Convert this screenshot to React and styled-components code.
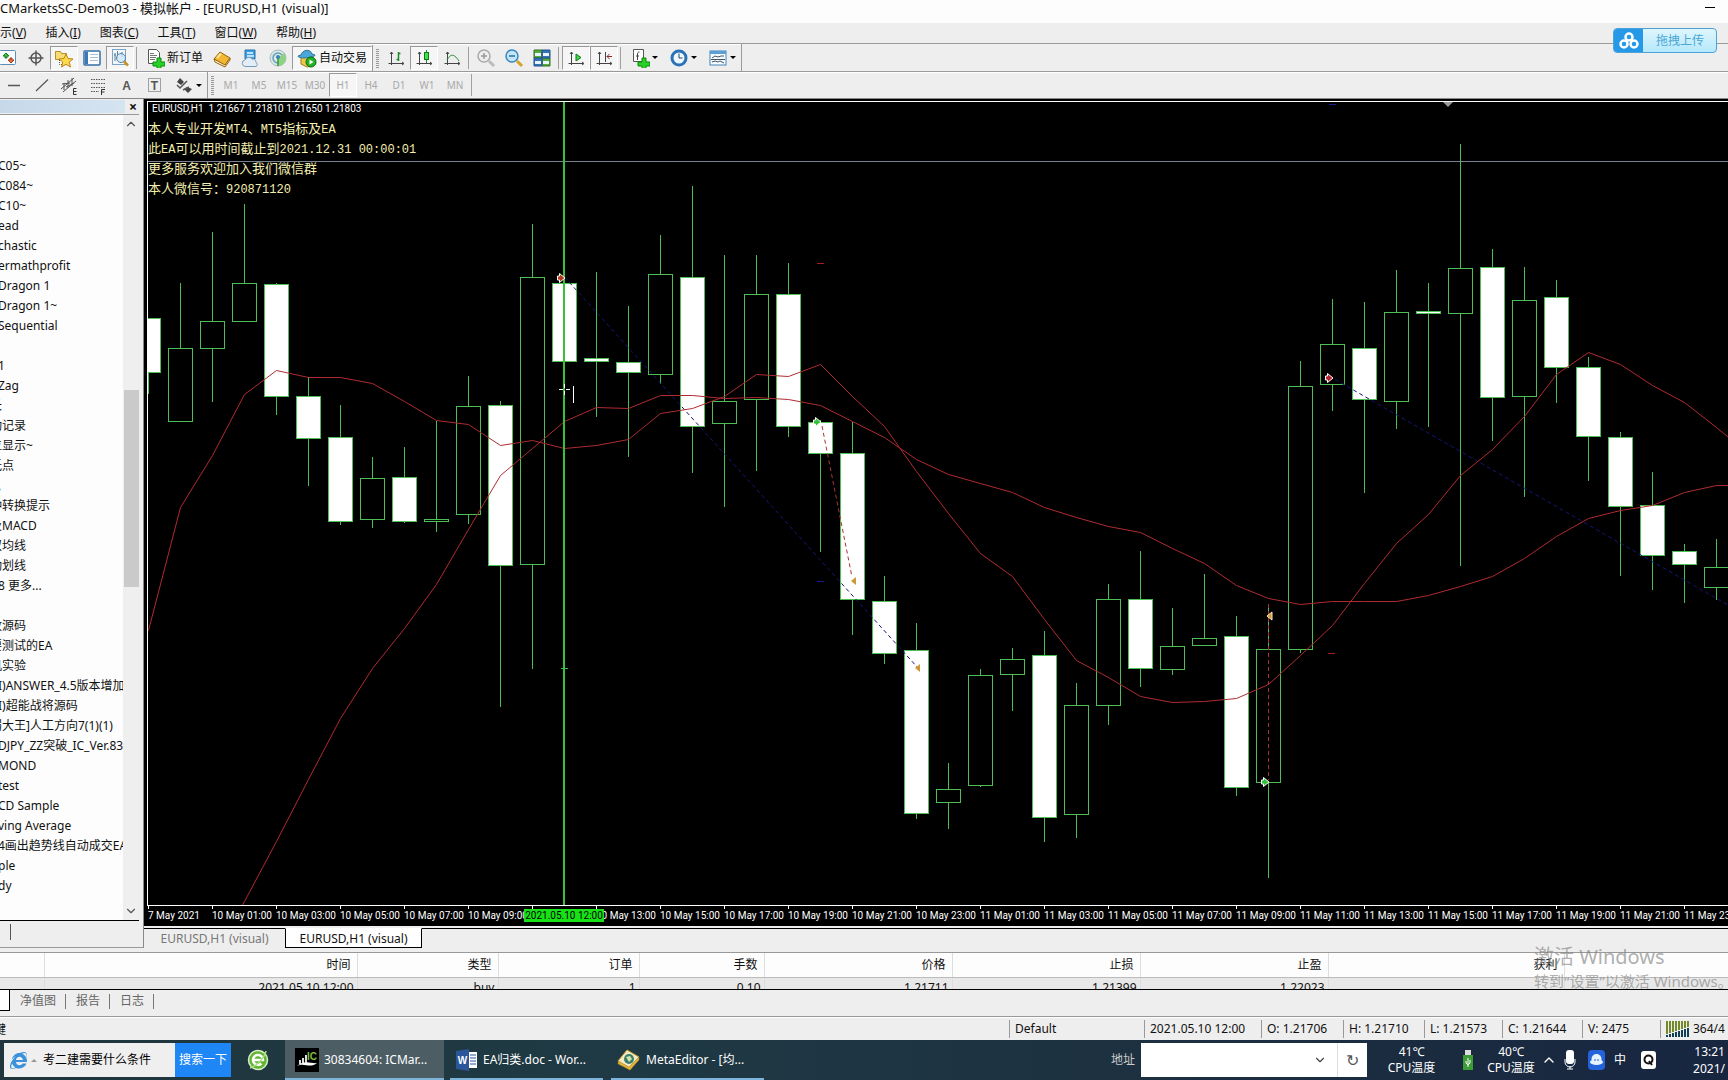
import React from 'react';
import styled, { createGlobalStyle, css } from 'styled-components';
import { FaInternetExplorer } from 'react-icons/fa';
import { ChevronDown, ChevronUp } from 'lucide-react';

const GlobalStyle = createGlobalStyle`
  * {
    box-sizing: border-box;
  }
  body {
    margin: 0;
    overflow: hidden;
    background: #eeeeee;
    color: #111;
    font-family: "Noto Sans", "Noto Sans CJK SC", sans-serif;
    font-size: 12px;
    line-height: 20px;
  }
  button, input {
    font: inherit;
    color: inherit;
    margin: 0;
    padding: 0;
    border: 0;
    background: none;
  }
  svg {
    display: block;
    flex: none;
  }
`;

const Page = styled.div`
  display: flex;
  flex-direction: column;
  min-height: 100vh;
  position: relative;
`;

const TitleBar = styled.header`
  display: flex;
  justify-content: space-between;
  height: 23px;
  padding: 0 13px 0 0;
  background: #fdfdfd;
  font-size: 13px;
  line-height: 16px;
`;

const MinimizeButton = styled.button`
  width: 10px;
  height: 8px;
  border-bottom: 1px solid #000;
`;

const MenuBar = styled.nav`
  display: flex;
  gap: 19px;
  height: 20px;
`;

const MenuItem = styled.button`
  white-space: nowrap;
`;

const Toolbar = styled.div`
  display: flex;
  align-items: center;
  width: ${({ $full }) => ($full ? 'auto' : '742px')};
  height: 27px;
  border-top: 1px solid #9a9a9a;
  border-right: ${({ $full }) => ($full ? 0 : 1)}px solid #9a9a9a;
  box-shadow: inset 0 1px #fff;
`;

const ToolbarLine = styled.div`
  border-top: 1px solid #9a9a9a;
  overflow: hidden;
  ${Toolbar} {
    border-top: 0;
  }
`;

const ToolGroup = styled.div`
  display: flex;
  align-items: center;
  margin-left: ${({ $clip }) => ($clip ? '-6px' : 0)};
`;

const ToolButton = styled.button`
  display: flex;
  align-items: center;
  justify-content: center;
  flex: none;
  gap: 2px;
  width: ${({ $width }) => $width || 28}px;
  height: 24px;
  white-space: nowrap;
  ${({ $pressed }) =>
    $pressed &&
    css`
      border: 1px solid #fff;
      border-top-color: #999;
      border-left-color: #999;
      background: #f6f6f6;
    `}
`;

const PeriodButton = styled(ToolButton)`
  font-size: 10px;
  color: #a8a8a8;
`;

const Arrow = styled.i`
  border: 3px solid transparent;
  border-top-color: #000;
  border-bottom: 0;
`;

const Separator = styled.i`
  width: 6px;
  height: 22px;
  background: linear-gradient(#a0a0a0, #a0a0a0) 2px 0 / 1px 100% no-repeat;
`;

const Grip = styled.i`
  width: 10px;
  height: 26px;
  border-left: 1px solid #999;
  background: repeating-linear-gradient(#999 0 1px, transparent 1px 2px) 3px 4px / 3px 19px no-repeat;
`;

const Main = styled.main`
  display: flex;
  flex: 1;
  min-height: 0;
  padding-bottom: 4px;
  border-top: 1px solid #888;
`;

const Navigator = styled.aside`
  display: flex;
  flex-direction: column;
  width: 144px;
  flex: none;
  border-right: 1px solid #888;
  border-bottom: 1px solid #999;
`;

const NavHeader = styled.div`
  display: flex;
  align-items: center;
  justify-content: flex-end;
  height: 16px;
  padding-right: 2px;
  margin-right: 4px;
  border-bottom: 1px solid #999;
  background: linear-gradient(90deg, #c6d9ea, #d5e4f1) 0 1px / 125px 13px no-repeat;
`;

const CloseButton = styled.button`
  font-size: 14px;
  font-weight: 700;
  line-height: 12px;
`;

const NavBody = styled.div`
  display: flex;
  flex: 1;
  min-height: 0;
  margin-right: 4px;
  border-bottom: 1px solid #000;
`;

const Tree = styled.ul`
  width: 123px;
  margin: 0;
  padding: 41px 0 0;
  overflow: hidden;
  list-style: none;
  background: #fdfdfd;
`;

const TreeItem = styled.li`
  height: 20px;
  margin-left: ${({ $cut }) => ($cut ? -10 : -2)}px;
  white-space: nowrap;
`;

const ScrollBar = styled.div`
  display: flex;
  flex-direction: column;
  justify-content: space-between;
  align-items: center;
  width: 16px;
  padding: 2px 0;
  background: #efefef;
  color: #555;
`;

const Thumb = styled.i`
  width: 15px;
  flex: 0 0 197px;
  background: #cacaca;
`;

const Track = styled.div`
  display: flex;
  flex-direction: column;
  flex: 1;
  &::before {
    content: '';
    flex: 258 0 0;
  }
  &::after {
    content: '';
    flex: 315 0 0;
  }
`;

const NavTabs = styled.div`
  height: 26px;
  padding: 3px 0 0 10px;
  &::before {
    content: '';
    display: block;
    width: 1px;
    height: 16px;
    background: #555;
  }
`;

const ChartColumn = styled.section`
  display: flex;
  flex-direction: column;
  flex: 1;
  min-width: 0;
`;

const ChartFrame = styled.div`
  display: flex;
  flex: 1;
  min-height: 0;
  flex-direction: column;
  padding: 2px 0 0 3px;
  background: #000;
  color: #fff;
`;

const Plot = styled.div`
  flex: 1;
  min-height: 0;
  position: relative;
  border: 1px solid #fff;
  border-right: 0;
  overflow: hidden;
`;

const Overlay = styled.div`
  position: absolute;
  top: 0;
  left: 0;
`;

const Quote = styled.div`
  height: 16px;
  padding-left: 4px;
  font: 10px/14px Roboto, sans-serif;
  white-space: pre;
`;

const Notice = styled.p`
  height: 20px;
  margin: 0;
  font-family: "Noto Sans CJK SC", sans-serif;
  font-size: 13px;
  line-height: 20px;
  color: #f3efb0;
  white-space: pre;
`;

const Mono = styled.span`
  font-family: "Liberation Mono", monospace;
  font-size: 12px;
  line-height: 12px;
`;

const TimeAxis = styled.div`
  position: relative;
  display: flex;
  height: 20px;
  padding-left: 1px;
  overflow: hidden;
  font: 10px/20px Roboto, sans-serif;
`;

const TimeLabel = styled.span`
  flex: 0 0 64px;
  white-space: nowrap;
  background: linear-gradient(#fff, #fff) 0 0 / 1px 3px no-repeat;
`;

const TimeMark = styled.span`
  position: absolute;
  left: 377px;
  top: 3px;
  width: 80px;
  line-height: 13px;
  text-align: center;
  color: #000;
  background: #16e216;
`;

const ChartTabs = styled.div`
  display: flex;
  height: 20px;
  margin-top: 2px;
`;

const ChartTab = styled.button`
  width: ${({ $active }) => ($active ? 137 : 141)}px;
  border-top: 1px solid #000;
  color: #777;
  ${({ $active }) =>
    $active &&
    css`
      border: 1px solid #000;
      border-top-color: #fff;
      background: #fff;
      color: #111;
    `}
`;

const TabRest = styled.i`
  flex: 1;
  border-top: 1px solid #000;
`;

const Terminal = styled.section`
  position: relative;
  height: 38px;
  overflow: hidden;
  border-top: 1px solid #999;
  border-bottom: 1px solid #000;
`;

const OrderTable = styled.table`
  width: 100%;
  table-layout: fixed;
  border-collapse: collapse;
  line-height: 23px;
  th,
  td {
    padding: 0 6px;
    text-align: right;
    font-weight: 400;
    border-right: 1px solid #ddd;
  }
  th {
    height: 24px;
    background: #fdfdfd;
    border-bottom: 1px solid #bbb;
  }
  td {
    padding: 0 3px;
    background: #e8e8e8;
    line-height: 20px;
  }
  th:last-child,
  td:last-child {
    border-right: 0;
  }
`;

const TerminalTabs = styled.div`
  display: flex;
  height: 27px;
  padding-bottom: 5px;
  border-bottom: 1px solid #999;
  color: #666;
`;

const ActiveStub = styled.i`
  width: 10px;
  background: #fff;
  border-right: 1px solid #000;
  border-bottom: 1px solid #000;
`;

const TerminalTab = styled.button`
  padding: 0 10px;
  line-height: 18px;
  background: linear-gradient(#777, #777) 100% 4px / 1px 15px no-repeat;
`;

const StatusBar = styled.footer`
  display: flex;
  height: 23px;
  padding-top: 3px;
  box-shadow: inset 0 1px #fff;
  overflow: hidden;
`;

const Hint = styled.span`
  flex: 1;
  margin-left: -6px;
`;

const StatusCell = styled.span`
  display: flex;
  align-items: center;
  gap: 3px;
  flex: 0 0 ${({ $width }) => $width}px;
  height: 18px;
  padding-left: 5px;
  border-left: 1px solid #999;
  white-space: nowrap;
  overflow: hidden;
`;

const Taskbar = styled.div`
  display: flex;
  align-items: center;
  height: 40px;
  padding-left: 4px;
  overflow: hidden;
  background: linear-gradient(90deg, #20353c, #1f3a44 35%, #1c2f40 70%, #182640);
  color: #fff;
`;

const SearchBox = styled.form`
  display: flex;
  align-items: center;
  height: 34px;
  padding-left: 6px;
  background: #efefef;
  color: #000;
`;

const SearchInput = styled.input`
  width: 138px;
  padding-left: 6px;
`;

const UpMark = styled.i`
  margin-left: 4px;
  border: 3px solid transparent;
  border-top: 0;
  border-bottom-color: #999;
`;

const SearchButton = styled.button`
  width: 56px;
  height: 34px;
  background: #1f86f5;
  color: #fff;
`;

const PinButton = styled.button`
  display: flex;
  justify-content: center;
  width: 54px;
`;

const Task = styled.button`
  display: flex;
  align-items: center;
  gap: 5px;
  width: ${({ $active }) => ($active ? 159 : 153)}px;
  height: 40px;
  margin-right: ${({ $active }) => ($active ? 6 : 8)}px;
  padding: 2px 0 0 ${({ $active }) => ($active ? 10 : 6)}px;
  border-bottom: 2px solid #7db4dc;
  background: ${({ $active }) => ($active ? '#4c5d64' : 'none')};
  white-space: nowrap;
`;

const Tray = styled.div`
  display: flex;
  align-items: center;
  margin-left: auto;
`;

const Address = styled.label`
  display: flex;
  align-items: center;
  gap: 6px;
  color: #ccc;
`;

const AddressInput = styled.input`
  width: 172px;
  height: 34px;
`;

const AddressBox = styled.span`
  display: flex;
  align-items: center;
  height: 34px;
  background: #fff;
  color: #444;
`;

const Refresh = styled.button`
  width: 30px;
  height: 34px;
  margin-left: 10px;
  border-left: 1px solid #ddd;
  font-size: 16px;
  color: #555;
`;

const Gauge = styled.span`
  width: ${({ $width }) => $width}px;
  text-align: center;
  line-height: 16px;
  white-space: pre-line;
`;

const TrayIcon = styled.span`
  display: flex;
  justify-content: center;
  width: ${({ $width }) => $width || 24}px;
`;

const Clock = styled.time`
  width: 35px;
  margin-left: 29px;
  line-height: 17px;
  text-align: right;
  padding-right: 3px;
  white-space: pre-line;
`;

const UploadButton = styled.button`
  position: absolute;
  top: 28px;
  right: 11px;
  display: flex;
  align-items: center;
  width: 104px;
  height: 25px;
  border: 1px solid #4da3d8;
  border-radius: 4px;
  overflow: hidden;
  background: linear-gradient(#dff5fd, #b5e9fb);
  color: #4aa6d4;
`;

const UploadLogo = styled.span`
  display: flex;
  align-items: center;
  justify-content: center;
  width: 29px;
  height: 100%;
  margin-right: 13px;
  background: #2598e8;
`;

const Watermark = styled.div`
  position: absolute;
  right: 0;
  bottom: 88px;
  width: 194px;
  overflow: hidden;
  white-space: nowrap;
  color: rgba(130, 130, 130, 0.65);
  font-size: 15px;
  line-height: 22px;
  strong {
    display: block;
    font-size: 20px;
    font-weight: 400;
    line-height: 26px;
  }
`;

const Icon = ({ size = 20, children }) => (
  <svg width={size} height={size} viewBox="0 0 20 20" fill="none" stroke="#555" strokeWidth="1">
    {children}
  </svg>
);

const Plus = () => (
  <path d="M12 10h4v4h4v4h-4v3h-4v-3H8v-4h4z" fill="#27d127" stroke="#0b8a0b" />
);

const MarketIcon = () => (
  <Icon>
    <rect x="1.5" y="2.5" width="16" height="14" rx="1" fill="#f8fbfe" stroke="#5b8fb7" />
    <path d="M8 5l3 3H9v2H7V8H5z" fill="#3cc43c" stroke="#18761b" />
    <path d="M13 15l-3-3h2v-2h2v2h2z" fill="#ee6b3b" stroke="#a43912" />
  </Icon>
);

const CrossIcon = () => (
  <Icon>
    <circle cx="10" cy="10" r="5" strokeWidth="1.5" />
    <path d="M10 2.500v15M2.500 10h15" strokeWidth="1.500" />
  </Icon>
);

const FavIcon = () => (
  <Icon>
    <path d="M1.5 3.500h5l1 2h5v6h-11z" fill="#f6dc72" stroke="#b5912c" />
    <path d="M5.500 12v4.500h4" strokeDasharray="1 1" />
    <path d="M12 6l2 4.500 5 .5-3.800 3 1.300 5-4.500-2.700L7.600 19l1.200-5L5 11l5-.5z" fill="#ffd94c" stroke="#b88713" />
  </Icon>
);

const PanelIcon = () => (
  <Icon>
    <rect x="2" y="3" width="16" height="14" rx="1" fill="#fff" stroke="#336fa8" strokeWidth="1.500" />
    <path d="M3 4h3v12H3z" fill="#3b78b5" stroke="none" />
    <path d="M8 6.500h8M8 9.500h8M8 12.500h8" stroke="#a6bfd8" />
  </Icon>
);

const TesterIcon = () => (
  <Icon>
    <rect x="2.500" y="1.500" width="13" height="15" fill="#f1f7fb" stroke="#7ba3c5" />
    <path d="M5 5v8M7.500 3v8M12 4v5M4 7h2" stroke="#5c7b93" />
    <circle cx="11" cy="10" r="4.500" fill="#cfe7f7" fillOpacity=".8" stroke="#5487ad" />
    <path d="M14 13.500l4 4" stroke="#c69223" strokeWidth="2.500" />
  </Icon>
);

const OrderIcon = () => (
  <Icon>
    <path d="M3.500 1.500h8l3 3v11h-11z" fill="#fff" />
    <path d="M5 5.500h4M5 7.500h7M5 9.500h6M5 11.500h5" stroke="#777" />
    <Plus />
  </Icon>
);

const BookIcon = () => (
  <Icon>
    <path d="M2 11l6-7 10 6-5 7.500z" fill="#f2b632" stroke="#94620c" />
    <path d="M2 11l1 3 10 5 5-7v-2l-5 7z" fill="#fff1c7" stroke="#94620c" />
    <path d="M5 10l4-4.500" stroke="#ffe69a" strokeWidth="2" />
  </Icon>
);

const CloudIcon = () => (
  <Icon>
    <path d="M5 2h10v9H5z" fill="#3da1e4" stroke="#2270aa" />
    <path d="M7 5h6M7 8h7" stroke="#e9f7ff" strokeWidth="1.500" />
    <path d="M5 18.500a3.300 3.300 0 0 1 0-6.500 4 4 0 0 1 7-1 3.300 3.300 0 0 1 4 3.500 2.200 2.200 0 0 1 0 4z" fill="#e2edf8" stroke="#7b9abb" />
  </Icon>
);

const SignalIcon = () => (
  <Icon>
    <circle cx="10" cy="10" r="8" fill="#d9ebe0" stroke="#a6bcc9" />
    <circle cx="10" cy="10" r="5" stroke="#689bc2" strokeWidth="1.500" />
    <path d="M10 10l1 8a8 8 0 0 0 5-13z" fill="#8fd380" stroke="none" />
    <path d="M10 10v8" stroke="#32963d" strokeWidth="1.500" />
    <circle cx="10" cy="9" r="2" fill="#3a80bd" stroke="none" />
  </Icon>
);

const AutoIcon = () => (
  <Icon>
    <path d="M4 9h11l2 8-7 2-6-3z" fill="#efc74b" stroke="#a37a1d" />
    <path d="M4 7c1-5 9-7 11-1l3 1c1 2-16 5-17 1z" fill="#4aa8d8" stroke="#2f7398" />
    <circle cx="14" cy="14" r="5" fill="#25b325" stroke="#0a6b0a" />
    <path d="M12.500 11.500v5l4-2.500z" fill="#fff" stroke="none" />
  </Icon>
);

const Axes = () => <path d="M5.500 4v13M2.500 15.500h15M4 6l1.500-2L7 6M16 14l2 1.500-2 1.500" stroke="#444" />;

const BarsIcon = () => (
  <Icon>
    <Axes />
    <path d="M12.500 4v9M10.500 11.500h2M12.500 5.500h2" stroke="#1c8a2b" strokeWidth="1.500" />
  </Icon>
);

const CandlesIcon = () => (
  <Icon>
    <Axes />
    <path d="M12.500 2v13" stroke="#1c8a2b" />
    <rect x="10.500" y="4.500" width="4" height="7" fill="#3fe04c" stroke="#0c7d18" />
  </Icon>
);

const LineIcon = () => (
  <Icon>
    <Axes />
    <path d="M5 12c3-5 6-8 12 1" stroke="#1c8a2b" />
  </Icon>
);

const ZoomIcon = ({ out }) => (
  <Icon>
    <circle cx="8" cy="8" r="6" fill={out ? '#c4e5f8' : '#eee'} stroke={out ? '#3888bd' : '#aaa'} strokeWidth="1.500" />
    <path d={out ? 'M5 8h6' : 'M5 8h6M8 5v6'} stroke={out ? '#256fa2' : '#999'} strokeWidth="1.500" />
    <path d="M13 13l5 5" stroke={out ? '#d7a329' : '#bbb'} strokeWidth="3" />
  </Icon>
);

const TileIcon = () => (
  <Icon>
    <path d="M2 2h8v8H2zM10 10h8v8h-8z" fill="#55ad3c" stroke="#356f2a" />
    <path d="M10 2h8v8h-8zM2 10h8v8H2z" fill="#3472b9" stroke="#24518a" />
    <path d="M3 5h6v3H3zM11 5h6v3h-6zM3 13h6v3H3zM11 13h6v3h-6z" fill="#eaf4ff" stroke="none" />
  </Icon>
);

const ScrollIcon = () => (
  <Icon>
    <Axes />
    <path d="M10 6v7l5-3.500z" fill="#41d54b" stroke="#117c1c" />
  </Icon>
);

const ShiftIcon = () => (
  <Icon>
    <Axes />
    <path d="M11.500 4v10" stroke="#444" />
    <path d="M18 8.500h-5M15.500 6L13 8.500l2.500 2.500" stroke="#8b2a22" />
  </Icon>
);

const IndicatorIcon = () => (
  <Icon>
    <path d="M3.500 4.500v-3h10v12h-10z" fill="#fff" />
    <path d="M9.500 4c-2 0-2 1-2 3v5M6 8h3" stroke="#444" />
    <Plus />
  </Icon>
);

const ClockIcon = () => (
  <Icon>
    <circle cx="10" cy="10" r="7" fill="#eef8ff" stroke="#2972b8" strokeWidth="3" />
    <path d="M10 5.500V10h3.500" stroke="#345" />
  </Icon>
);

const TemplateIcon = () => (
  <Icon>
    <rect x="2" y="3" width="16" height="14" fill="#f5fbff" stroke="#4584b7" />
    <path d="M2 3h16v3H2z" fill="#5b9fd6" stroke="none" />
    <path d="M4 10l3-2 3 1 3-1 3 0M4 14l3-1 3 1 2-1 4 2M3 11.500h14" stroke="#456" />
  </Icon>
);

const HLineIcon = () => <Icon><path d="M4 10.500h12" strokeWidth="1.500" /></Icon>;
const TrendIcon = () => <Icon><path d="M4 16L16 4.500" strokeWidth="1.200" /></Icon>;

const ChannelIcon = () => (
  <Icon>
    <path d="M1 14L14 3M3 17L16 6M4 8v7M8 5v8M12 3v8M2 9l8-1M6 12l8-4" />
    <path d="M16.500 13.500h-3v6h3M13.500 16.500h3" stroke="#333" />
  </Icon>
);

const FiboIcon = () => (
  <Icon>
    <path d="M3 4.500h14M3 8.500h14M3 12.500h14M3 16.500h8" strokeDasharray="1.500 1" />
    <path d="M13.500 20v-5.500h3.500M13.500 17h3" stroke="#333" />
  </Icon>
);

const LetterIcon = ({ letter, boxed }) => (
  <Icon>
    {boxed && <rect x="4.500" y="3.500" width="12" height="13" strokeDasharray="1 1" />}
    <text x="10.500" y="15" textAnchor="middle" fontFamily="Liberation Sans, sans-serif" fontWeight="700" fontSize="12" fill="#555" stroke="none">
      {letter}
    </text>
  </Icon>
);

const ArrowsIcon = () => (
  <Icon>
    <path d="M6 3l4 4-3 3-4-3zM14 18l-4-4 3-2 5 2z" fill="#444" stroke="none" />
    <path d="M3 10l3 3 7-7M9 15l6-3" strokeWidth="1.500" />
  </Icon>
);

const STANDARD = [
  { label: '市场报价', icon: <MarketIcon /> },
  { label: '十字线', icon: <CrossIcon /> },
  { label: '导航', icon: <FavIcon />, pressed: true },
  { label: '终端', icon: <PanelIcon /> },
  { label: '测试', icon: <TesterIcon />, pressed: true },
];

const SERVICES = [
  { label: 'MetaEditor', icon: <BookIcon /> },
  { label: '云', icon: <CloudIcon /> },
  { label: '信号', icon: <SignalIcon /> },
];

const CHART_TYPES = [
  { label: '柱状图', icon: <BarsIcon /> },
  { label: '蜡烛图', icon: <CandlesIcon />, pressed: true },
  { label: '折线图', icon: <LineIcon /> },
];

const ZOOM_TOOLS = [
  { label: '放大', icon: <ZoomIcon /> },
  { label: '缩小', icon: <ZoomIcon out /> },
  { label: '平铺', icon: <TileIcon /> },
];

const SCROLL_TOOLS = [
  { label: '自动滚动', icon: <ScrollIcon />, pressed: true },
  { label: '图表平移', icon: <ShiftIcon />, pressed: true },
];

const DROPDOWNS = [
  { label: '指标', icon: <IndicatorIcon />, menu: true },
  { label: '周期', icon: <ClockIcon />, menu: true },
  { label: '模板', icon: <TemplateIcon />, menu: true },
];

const DRAWING = [
  { label: '水平线', icon: <HLineIcon /> },
  { label: '趋势线', icon: <TrendIcon /> },
  { label: '通道', icon: <ChannelIcon /> },
  { label: '斐波那契', icon: <FiboIcon /> },
  { label: '文字', icon: <LetterIcon letter="A" /> },
  { label: '标签', icon: <LetterIcon letter="T" boxed /> },
  { label: '箭头', icon: <ArrowsIcon />, menu: true },
];

const PERIODS = ['M1', 'M5', 'M15', 'M30', 'H1', 'H4', 'D1', 'W1', 'MN'];

const MENUS = [
  ['示', 'V'],
  ['插入', 'I'],
  ['图表', 'C'],
  ['工具', 'T'],
  ['窗口', 'W'],
  ['帮助', 'H'],
];

// a leading "|" marks an item whose first glyph is scrolled out of the panel
const TREE = [
  'C05~', 'C084~', 'C10~', 'ead', 'chastic', 'ermathprofit', 'Dragon 1', 'Dragon 1~', 'Sequential', '',
  '1', 'Zag', '|长', '|动记录', '|位显示~', '|低点', ',', '|钟转换提示', '|及MACD', '|双均线', '|动划线',
  '8 更多...', '', '|改源码', '|要测试的EA', '|机实验', 'I)ANSWER_4.5版本增加', 'I)超能战将源码',
  '|弱大王]人工方向7(1)(1)', 'DJPY_ZZ突破_IC_Ver.83', 'MOND', 'test', 'CD Sample', 'ving Average',
  '4画出趋势线自动成交EA', 'ple', 'dy',
];

const HOURS = ['01', '03', '05', '07', '09', '11', '13', '15', '17', '19', '21', '23'];
const TIMES = [
  '7 May 2021',
  ...HOURS.map((h) => `10 May ${h}:00`),
  ...HOURS.map((h) => `11 May ${h}:00`),
];
const MARKED = 6; // this label gives way to the highlighted time

// high, body top, body bottom, low, 1 = bearish (filled)
const CANDLES = [
  [318, 318, 372, 394, 1], [283, 348, 421, 421, 0], [232, 321, 348, 402, 0], [204, 283, 321, 321, 0],
  [283, 284, 396, 415, 1], [377, 396, 438, 486, 1], [405, 437, 521, 525, 1], [457, 478, 519, 528, 0],
  [447, 477, 521, 523, 1], [421, 519, 521, 532, 0], [376, 406, 514, 524, 0], [401, 405, 565, 707, 1],
  [224, 277, 564, 669, 0], [283, 283, 361, 361, 1], [272, 358, 361, 417, 1], [306, 362, 372, 457, 1],
  [235, 274, 374, 384, 0], [186, 277, 426, 473, 1], [255, 401, 423, 507, 0], [255, 294, 399, 471, 0],
  [263, 294, 426, 437, 1], [420, 422, 453, 552, 1], [422, 453, 599, 635, 1], [576, 601, 653, 664, 1],
  [623, 650, 813, 819, 1], [763, 789, 802, 829, 0], [669, 675, 785, 787, 0], [648, 659, 674, 711, 0],
  [631, 655, 817, 842, 1], [683, 705, 814, 838, 0], [584, 599, 705, 725, 0], [551, 599, 668, 687, 1],
  [608, 646, 669, 675, 0], [574, 638, 645, 645, 0], [616, 636, 787, 796, 1], [606, 649, 782, 878, 0],
  [361, 386, 649, 653, 0], [299, 344, 384, 411, 0], [302, 348, 399, 493, 1], [270, 312, 401, 429, 0],
  [283, 311, 313, 427, 1], [144, 268, 313, 566, 0], [249, 267, 397, 441, 1], [267, 300, 396, 497, 0],
  [280, 297, 367, 403, 1], [357, 367, 436, 481, 1], [432, 437, 506, 576, 1], [472, 505, 555, 590, 1],
  [544, 551, 564, 603, 1], [539, 567, 587, 600, 0],
];

// one value per candle
const FAST_MA = [
  630, 507, 455, 394, 370, 377, 377, 383, 401, 420, 424, 445, 440, 448, 445, 439, 413, 408, 396, 374, 376, 364,
  396, 426, 471, 513, 553, 576, 619, 660, 677, 696, 702, 701, 698, 684, 655, 625, 583, 543, 514, 475, 449,
  416, 374, 352, 364, 385, 402, 427, 453,
];
const SLOW_MA = [
  1080, 1020, 960, 901, 841, 779, 718, 668, 628, 584, 529, 475, 448, 421, 407, 408, 395, 395, 398, 397, 399, 405,
  421, 437, 459, 474, 483, 492, 507, 517, 526, 532, 548, 563, 585, 598, 604, 601, 601, 601, 595, 586, 576, 558,
  536, 518, 510, 505, 492, 485, 485,
];

const STEP = 32;
const LEFT = 148;
const TOP = 102;

const toLine = (values) => values.map((y, i) => `${LEFT + i * STEP + 0.5},${y + 0.5}`).join(' ');

const EntryArrow = ({ x, y, color }) => (
  <path transform={`translate(${x} ${y})`} d="M-3.500-2h2v-2.500l5.500 4.500-5.500 4.500v-2.500h-2z" fill={color} stroke="#fff" />
);

const ExitArrow = ({ x, y, pale }) => (
  <path transform={`translate(${x} ${y})`} d="M-3 0l5-4v8z" fill="#c99a35" stroke={pale ? '#ffe9c0' : 'none'} />
);

const Chart = () => (
  <svg width="100%" height="100%" aria-label="EURUSD H1">
    <g transform={`translate(${-LEFT} ${-TOP})`} fill="none">
      <path d="M148 161.500h4000" stroke="#778392" />
      {CANDLES.map(([high, top, bottom, low, filled], i) => {
        const x = LEFT + i * STEP;
        return (
          <g key={i} stroke="#4fbf55">
            <path d={`M${x + 0.5} ${high}V${top}M${x + 0.5} ${bottom}V${low}`} />
            <rect x={x - 11.5} y={top + 0.5} width="24" height={bottom - top} fill={filled ? '#fff' : 'none'} />
          </g>
        );
      })}
      <path d="M564.500 277L918 668M1329 376L1728 605" stroke="#15157a" strokeDasharray="4 3" />
      <polyline points={toLine(FAST_MA)} stroke="#b02b31" />
      <polyline points={toLine(SLOW_MA)} stroke="#b02b31" />
      <path d="M822 426L852 577M1268.500 604V780" stroke="#b0303a" strokeDasharray="4 3" />
      <path d="M564 102V906" stroke="#35c23a" strokeWidth="2" />
      <path d="M817 263.500h7M1328 653.500h7" stroke="#a51d20" />
      <path d="M817 581.500h7M1329 104.500h7" stroke="#1c1c8c" />
      <path d="M561 668.500h7" stroke="#35c23a" />
      <path d="M1443 102h10l-5 5z" fill="#999" />
      <EntryArrow x={561} y={278} color="#b3371d" />
      <EntryArrow x={817} y={422} color="#35c23a" />
      <EntryArrow x={1329} y={378} color="#b32430" />
      <EntryArrow x={1265} y={782} color="#35c23a" />
      <ExitArrow x={854} y={581} />
      <ExitArrow x={918} y={668} />
      <ExitArrow x={1270} y={616} pale />
      <path d="M559 389.500h4M566 389.500h4M564.500 384v4M564.500 391v4M573.500 386v17" stroke="#fff" />
    </g>
  </svg>
);

const NOTICES = [
  '本人专业开发MT4、MT5指标及EA',
  '此EA可以用时间截止到2021.12.31 00:00:01',
  '更多服务欢迎加入我们微信群',
  '本人微信号：920871120',
];

const COLUMNS = [
  ['', 44, ''],
  ['时间', 313, '2021.05.10 12:00'],
  ['类型', 141, 'buy'],
  ['订单', 141, '1'],
  ['手数', 125, '0.10'],
  ['价格', 188, '1.21711'],
  ['止损', 188, '1.21399'],
  ['止盈', 188, '1.22023'],
  ['获利', 236, ''],
  ['', null, ''],
];

const STATUS = [
  [135, 'Default'],
  [117, '2021.05.10 12:00'],
  [82, 'O: 1.21706'],
  [81, 'H: 1.21710'],
  [78, 'L: 1.21573'],
  [80, 'C: 1.21644'],
  [78, 'V: 2475'],
];

const Tools = ({ items, clip }) => (
  <ToolGroup $clip={clip}>
    {items.map(({ label, icon, pressed, menu }) => (
      <ToolButton key={label} aria-label={label} $pressed={pressed} $width={menu && 39}>
        {icon}
        {menu && <Arrow />}
      </ToolButton>
    ))}
  </ToolGroup>
);

const App = () => (
  <>
    <GlobalStyle />
    <Page>
      <TitleBar>
        <span>CMarketsSC-Demo03 - 模拟帐户 - [EURUSD,H1 (visual)]</span>
        <MinimizeButton aria-label="最小化" />
      </TitleBar>

      <MenuBar>
        {MENUS.map(([name, key]) => (
          <MenuItem key={key}>
            {name}(<u>{key}</u>)
          </MenuItem>
        ))}
      </MenuBar>

      <ToolbarLine>
        <Toolbar>
          <Tools items={STANDARD} clip />
          <Separator />
          <ToolButton $width={68}>
            <OrderIcon />
            新订单
          </ToolButton>
          <Tools items={SERVICES} />
          <ToolButton $width={80} $pressed>
            <AutoIcon />
            自动交易
          </ToolButton>
          <Grip />
          <Tools items={CHART_TYPES} />
          <Separator />
          <Tools items={ZOOM_TOOLS} />
          <Separator />
          <Tools items={SCROLL_TOOLS} />
          <Separator />
          <Tools items={DROPDOWNS} />
        </Toolbar>
      </ToolbarLine>

      <Toolbar $full>
        <Tools items={DRAWING} />
        <Grip />
        {PERIODS.map((p) => (
          <PeriodButton key={p} $pressed={p === 'H1'}>{p}</PeriodButton>
        ))}
        <Separator />
      </Toolbar>

      <Main>
        <Navigator>
          <NavHeader>
            <CloseButton aria-label="关闭">×</CloseButton>
          </NavHeader>
          <NavBody>
            <Tree>
              {TREE.map((name, i) => (
                <TreeItem key={i} $cut={name.startsWith('|')}>{name.replace('|', '')}</TreeItem>
              ))}
            </Tree>
            <ScrollBar>
              <ChevronUp size={14} />
              <Track>
                <Thumb />
              </Track>
              <ChevronDown size={14} />
            </ScrollBar>
          </NavBody>
          <NavTabs />
        </Navigator>

        <ChartColumn>
          <ChartFrame>
            <Plot>
              <Chart />
              <Overlay>
                <Quote>EURUSD,H1  1.21667 1.21810 1.21650 1.21803</Quote>
                {NOTICES.map((line) => (
                  <Notice key={line}>
                    {line.split(/([\x20-\x7e]+)/).map((part, i) => (i % 2 ? <Mono key={i}>{part}</Mono> : part))}
                  </Notice>
                ))}
              </Overlay>
            </Plot>
            <TimeAxis>
              {TIMES.map((t, i) => (
                <TimeLabel key={t}>{i !== MARKED && t}</TimeLabel>
              ))}
              <TimeMark>2021.05.10 12:00</TimeMark>
            </TimeAxis>
          </ChartFrame>
          <ChartTabs>
            <ChartTab>EURUSD,H1 (visual)</ChartTab>
            <ChartTab $active>EURUSD,H1 (visual)</ChartTab>
            <TabRest />
          </ChartTabs>
        </ChartColumn>
      </Main>

      <Terminal>
        <OrderTable>
          <colgroup>
            {COLUMNS.map(([, width], i) => (
              <col key={i} width={width || undefined} />
            ))}
          </colgroup>
          <thead>
            <tr>
              {COLUMNS.map(([title], i) => (
                <th key={i}>{title}</th>
              ))}
            </tr>
          </thead>
          <tbody>
            <tr>
              {COLUMNS.map(([, , value], i) => (
                <td key={i}>{value}</td>
              ))}
            </tr>
          </tbody>
        </OrderTable>
      </Terminal>
      <TerminalTabs>
        <ActiveStub />
        <TerminalTab>净值图</TerminalTab>
        <TerminalTab>报告</TerminalTab>
        <TerminalTab>日志</TerminalTab>
      </TerminalTabs>

      <StatusBar>
        <Hint>键</Hint>
        {STATUS.map(([width, text]) => (
          <StatusCell key={text} $width={width}>{text}</StatusCell>
        ))}
        <StatusCell $width={68}>
          <svg width="24" height="18" viewBox="0 0 24 18">
            {[0, 3, 6, 9, 12, 15, 18, 21].map((x, i) => (
              <g key={x}>
                <path d={`M${x} 1h2v${13 - i}h-2z`} fill="#75882c" />
                <path d={`M${x} ${15 - i}h2v${2 + i}h-2z`} fill="#123f58" />
              </g>
            ))}
          </svg>
          364/4
        </StatusCell>
      </StatusBar>

      <Taskbar>
        <SearchBox onSubmit={(e) => e.preventDefault()}>
          <FaInternetExplorer size={17} color="#3a92dc" />
          <UpMark />
          <SearchInput aria-label="搜索" defaultValue="考二建需要什么条件" />
          <SearchButton>搜索一下</SearchButton>
        </SearchBox>
        <PinButton aria-label="浏览器">
          <svg width="22" height="22" viewBox="0 0 22 22">
            <circle cx="11" cy="11" r="9.500" fill="#62b531" stroke="#d6efc8" strokeWidth="1.500" />
            <path d="M6 11h10a5 5 0 1 0-1.500 3.500" fill="none" stroke="#fff" strokeWidth="2.500" />
            <path d="M3 19C8 18 18 9 19 2" fill="none" stroke="#a8dc7e" strokeWidth="1.500" />
          </svg>
        </PinButton>
        <Task $active>
          <svg width="24" height="24" viewBox="0 0 24 24">
            <path d="M0 0h24v24H0z" fill="#000" />
            <path d="M4 12h2v4H4zM7 10h2v6H7zM10 7h2v8h-2z" fill="#ddd" />
            <path d="M2 18c7-4 13 3 20-3-6 1-12-4-20 3z" fill="#fff" />
            <text x="12" y="12" fontSize="10" fontWeight="700" fontFamily="Liberation Sans, sans-serif" fill="#83bd3f">IC</text>
          </svg>
          30834604: ICMar...
        </Task>
        <Task>
          <svg width="22" height="22" viewBox="0 0 22 22">
            <path d="M10 3h11v16H10z" fill="#fff" />
            <path d="M14 6h6M14 9h6M14 12h6M14 15h6" stroke="#2b579a" />
            <path d="M0 2l13-2v22L0 20z" fill="#2b579a" />
            <text x="6.500" y="15" fontSize="10" fontWeight="700" textAnchor="middle" fontFamily="Liberation Sans, sans-serif" fill="#fff">W</text>
          </svg>
          EA归类.doc - Wor...
        </Task>
        <Task>
          <svg width="24" height="22" viewBox="0 0 24 22">
            <path d="M1 12L10 1l12 7-9 13z" fill="#f4e9c2" stroke="#c79a28" />
            <path d="M1 12l11 6 10-10v3l-9 10L1 15z" fill="#e2b63a" stroke="#97701a" strokeWidth=".5" />
            <circle cx="12" cy="10" r="5" fill="#3d7d6c" />
            <path d="M9 8l4-1 2 3-3 3z" fill="#d2e4a4" />
          </svg>
          MetaEditor - [均...
        </Task>

        <Tray>
          <Address>
            地址
            <AddressBox>
              <AddressInput aria-label="地址" />
              <ChevronDown size={14} />
              <Refresh aria-label="刷新">↻</Refresh>
            </AddressBox>
          </Address>
          <Gauge $width={89}>{'41℃\nCPU温度'}</Gauge>
          <TrayIcon>
            <svg width="10" height="20" viewBox="0 0 10 20">
              <path d="M2 0h6v5H2z" fill="#ddd" />
              <path d="M0 5h10v15H0z" fill="#3c9c35" />
              <path d="M5 8v9M3 11v2l2 2M7 10v3l-2 2" fill="none" stroke="#fff" />
            </svg>
          </TrayIcon>
          <Gauge $width={62}>{'40℃\nCPU温度'}</Gauge>
          <TrayIcon $width={14}><ChevronUp size={16} /></TrayIcon>
          <TrayIcon $width={28}>
            <svg width="12" height="20" viewBox="0 0 12 20">
              <rect x="2" y="0" width="8" height="14" rx="3" fill="#fff" />
              <path d="M1 9v3a5 5 0 0 0 10 0V9M6 16v3M3 19h6" fill="none" stroke="#fff" />
            </svg>
          </TrayIcon>
          <TrayIcon>
            <svg width="17" height="20" viewBox="0 0 17 20">
              <rect width="17" height="20" rx="4" fill="#2462d9" />
              <circle cx="8.500" cy="9" r="5" fill="#e6f2ff" />
              <ellipse cx="8.500" cy="12" rx="6.500" ry="3" fill="#e6f2ff" />
              <path d="M7 9v2M10 9v2" stroke="#2462d9" />
            </svg>
          </TrayIcon>
          <TrayIcon>中</TrayIcon>
          <TrayIcon $width={32}>
            <svg width="15" height="18" viewBox="0 0 15 18">
              <rect width="15" height="18" rx="3" fill="#fff" />
              <circle cx="7.500" cy="8.500" r="4" fill="none" stroke="#111" strokeWidth="2" />
              <path d="M8 10l3 4" stroke="#111" strokeWidth="2" />
            </svg>
          </TrayIcon>
          <Clock>{'13:21\n2021/'}</Clock>
        </Tray>
      </Taskbar>

      <UploadButton>
        <UploadLogo>
          <svg width="20" height="18" viewBox="0 0 20 18" fill="none" stroke="#fff" strokeWidth="2.500">
            <circle cx="10" cy="5" r="3.500" />
            <circle cx="5" cy="12" r="3.500" />
            <circle cx="15" cy="12" r="3.500" />
          </svg>
        </UploadLogo>
        拖拽上传
      </UploadButton>
      <Watermark>
        <strong>激活 Windows</strong>
        转到“设置”以激活 Windows。
      </Watermark>
    </Page>
  </>
);

export default App;
